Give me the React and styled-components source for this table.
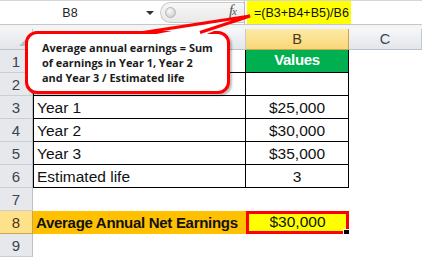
import React from 'react';
import styled, { createGlobalStyle } from 'styled-components';

const Global = createGlobalStyle`
  html, body { margin: 0; padding: 0; background: #fff; }
  body { width: 422px; height: 257px; overflow: hidden; font-family: "Liberation Sans", Arial, sans-serif; }
`;

const Page = styled.div`
  position: relative;
  width: 422px;
  height: 257px;
  overflow: hidden;
  display: flex;
  flex-direction: column;
  background: #fff;
`;

const FormulaBar = styled.div`
  display: flex;
  height: 25px;
  box-sizing: border-box;
  border-top: 1px solid #d6d6d6;
  border-bottom: 1px solid #c6c6c6;
  background: #fff;
`;

const NameBox = styled.div`
  width: 160px;
  display: grid;
  grid-template-columns: 140px 20px;
  align-items: center;
  font-size: 12.5px;
  color: #222;
`;

const NameText = styled.span`
  text-align: center;
`;

const DropArrow = styled.span`
  justify-self: center;
  width: 0;
  height: 0;
  border-left: 4px solid transparent;
  border-right: 4px solid transparent;
  border-top: 4px solid #333;
`;

const Splitter = styled.div`
  width: 84px;
  box-sizing: border-box;
  display: flex;
  align-items: center;
  justify-content: space-between;
  padding: 0 8px 0 4px;
  background: linear-gradient(#f7f7f7, #e9e9e9);
  border: 1px solid #c9c9c9;
  border-right: none;
  border-radius: 11px 0 0 11px;
  margin: 1px 0;
`;

const Knob = styled.span`
  width: 9px;
  height: 9px;
  border-radius: 50%;
  background: radial-gradient(circle at 40% 35%, #fafafa, #c4c4c4);
  border: 1px solid #b5b5b5;
`;

const Fx = styled.span`
  font-family: "Liberation Serif", "DejaVu Serif", serif;
  font-style: italic;
  font-size: 15px;
  line-height: 15px;
  margin-top: -3px;
  color: #555;
  letter-spacing: -1px;
  & small { font-size: 11px; }
`;

const FormulaInput = styled.div`
  flex: 1;
  display: flex;
  align-items: stretch;
  border-left: 1px solid #b8b8b8;
  padding-left: 2px;
`;

const Highlight = styled.span`
  display: flex;
  align-items: center;
  background: #ffff00;
  padding: 0 2px 0 7px;
  font-size: 12.5px;
  color: #111;
`;

const Band = styled.div`
  height: 4px;
  background: #f3f4f6;
`;

const Grid = styled.div`
  display: grid;
  grid-template-columns: 33px 213px 103px 73px;
  grid-template-rows: 21px repeat(9, 23px);
`;

const Corner = styled.div`
  position: relative;
  box-sizing: border-box;
  background: linear-gradient(#f4f5f7, #e2e5ea);
  border-right: 1px solid #b9c1cc;
  border-bottom: 1px solid #b9c1cc;
  &::after {
    content: '';
    position: absolute;
    right: 4px;
    bottom: 3px;
    width: 0;
    height: 0;
    border-left: 9px solid transparent;
    border-bottom: 9px solid #b8bcc2;
  }
`;

const ColHead = styled.div`
  box-sizing: border-box;
  display: flex;
  align-items: center;
  justify-content: center;
  font-size: 14.5px;
  color: ${p => (p.$active ? '#4a3a18' : '#3c4450')};
  background: ${p =>
    p.$active ? 'linear-gradient(#fdeaa6, #f9d778)' : 'linear-gradient(#f6f7f9, #e3e6ea)'};
  border-right: 1px solid ${p => (p.$active ? '#c8a453' : '#c4c9d0')};
  border-bottom: 1px solid ${p => (p.$active ? '#c8a453' : '#b9c1cc')};
`;

const RowHead = styled.div`
  box-sizing: border-box;
  display: flex;
  align-items: center;
  justify-content: center;
  font-size: 15px;
  color: ${p => (p.$active ? '#4a3a18' : '#3c4450')};
  background: ${p => (p.$active ? '#ffe189' : '#e6e8ec')};
  border-right: 1px solid ${p => (p.$active ? '#c8a453' : '#b9c1cc')};
  border-bottom: 1px solid ${p => (p.$active ? '#c8a453' : '#c9ced5')};
`;

const Cell = styled.div`
  position: relative;
  box-sizing: border-box;
  display: flex;
  align-items: flex-end;
  justify-content: ${p => (p.$align === 'center' ? 'center' : 'flex-start')};
  padding: 0 0 ${p => (p.$pb ?? 1)}px ${p => (p.$align === 'center' ? 0 : 3)}px;
  line-height: 18px;
  font-size: ${p => (p.$bold ? '15px' : '15.5px')};
  letter-spacing: ${p => (p.$bold ? '-0.3px' : '0')};
  font-weight: ${p => (p.$bold ? 700 : 400)};
  color: ${p => p.$color || '#111'};
  background: ${p => p.$bg || '#fff'};
  border-left: ${p => (p.$bl ? '1px solid #000' : 'none')};
  border-right: ${p => (p.$br ? '1px solid #000' : 'none')};
  border-bottom: ${p => (p.$bb ? '1px solid #000' : 'none')};
  white-space: nowrap;
`;

const SelectedCell = styled(Cell)`
  border: 3px solid #ff0000;
  padding-bottom: 0;
`;

const FillHandle = styled.span`
  position: absolute;
  right: -3px;
  bottom: -4px;
  width: 5px;
  height: 5px;
  background: #000;
  border: 1px solid #fff;
  border-right: none;
  border-bottom: none;
`;

const Callout = styled.div`
  position: absolute;
  left: 25px;
  top: 31px;
  width: 205px;
  height: 63px;
  box-sizing: border-box;
  border: 3px solid #ff0000;
  border-radius: 12px;
  background: #fff;
  box-shadow: 2px 2px 2px rgba(0, 0, 0, 0.25);
  padding: 6px 0 0 14px;
  font-family: "Open Sans", "Liberation Sans", sans-serif;
  font-weight: 700;
  font-size: 10.9px;
  line-height: 15px;
  color: #1b1b1b;
  white-space: nowrap;
`;

const Tail = styled.svg`
  position: absolute;
  left: 0;
  top: 0;
  pointer-events: none;
`;

const rows = [
  { n: 1, a: '', b: 'Values', head: true },
  { n: 2, a: '', b: '' },
  { n: 3, a: 'Year 1', b: '$25,000' },
  { n: 4, a: 'Year 2', b: '$30,000' },
  { n: 5, a: 'Year 3', b: '$35,000' },
  { n: 6, a: 'Estimated life', b: '3' },
];

export default function App() {
  return (
    <Page>
      <Global />
      <FormulaBar>
        <NameBox>
          <NameText>B8</NameText>
          <DropArrow />
        </NameBox>
        <Splitter>
          <Knob />
          <Fx>
            f<small>x</small>
          </Fx>
        </Splitter>
        <FormulaInput>
          <Highlight>=(B3+B4+B5)/B6</Highlight>
        </FormulaInput>
      </FormulaBar>
      <Band />
      <Grid>
        <Corner />
        <ColHead>A</ColHead>
        <ColHead $active>B</ColHead>
        <ColHead>C</ColHead>

        {rows.map(r => (
          <React.Fragment key={r.n}>
            <RowHead>{r.n}</RowHead>
            <Cell $bl $br $bb>{r.a}</Cell>
            {r.head ? (
              <Cell $br $bb $align="center" $bold $bg="#00b050" $color="#fff" $pb={3}>
                {r.b}
              </Cell>
            ) : (
              <Cell $br $bb $align="center">{r.b}</Cell>
            )}
            <Cell />
          </React.Fragment>
        ))}

        <RowHead>7</RowHead>
        <Cell />
        <Cell />
        <Cell />

        <RowHead $active>8</RowHead>
        <Cell $bold $bg="#ffc000" $pb={2}>Average Annual Net Earnings</Cell>
        <SelectedCell $align="center" $bg="#ffff00">
          $30,000
          <FillHandle />
        </SelectedCell>
        <Cell />

        <RowHead>9</RowHead>
        <Cell />
        <Cell />
        <Cell />
      </Grid>

      <Callout>
        Average annual earnings = Sum
        <br />
        of earnings in Year 1, Year 2
        <br />
        and Year 3 / Estimated life
      </Callout>
      <Tail width="422" height="60" viewBox="0 0 422 60">
        <polygon points="146,36 250,16 202,36" fill="#fff" />
        <path d="M143 32.5 L250 16 L200 32.5" fill="none" stroke="#ff0000" strokeWidth="3" strokeLinejoin="miter" />
      </Tail>
    </Page>
  );
}
